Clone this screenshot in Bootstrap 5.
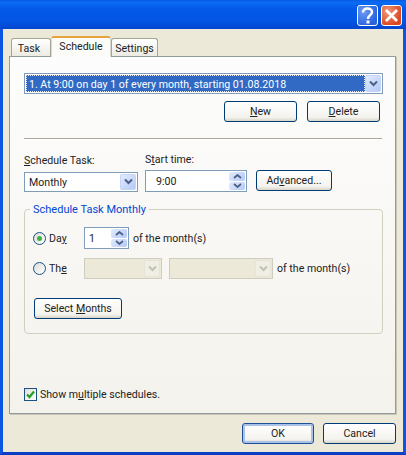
<!DOCTYPE html>
<html lang="en">
<head>
<meta charset="utf-8">
<title>Schedule</title>
<link href="https://cdn.jsdelivr.net/npm/bootstrap@5.3.0/dist/css/bootstrap.min.css" rel="stylesheet">
<style>
html,body{margin:0;padding:0;background:#ece9d8;overflow:hidden}
body{font-family:Roboto,"Liberation Sans",Arial,sans-serif;font-size:10.6px;line-height:14px;color:#222}
.xp-win{width:406px;height:455px;background:#ece9d8;border-left:3px solid #0b55e2;border-right:3px solid #0b55e2;border-bottom:3px solid #0a3fc4;box-sizing:border-box}
.xp-title{height:29px;margin:0 -3px;background:linear-gradient(180deg,#0a5ae0 0,#0a6cf5 8%,#045ae8 30%,#0255e5 70%,#0346cf 100%);padding:5px 4px 0 0;gap:3px;flex:none}
.xp-cap{width:21px;height:21px;border:1px solid #fff;border-radius:3px;padding:0}
.xp-help{background:radial-gradient(circle at 30% 30%,#6d9bf5,#2a62dc 75%)}
.xp-close{background:radial-gradient(circle at 30% 30%,#ef9a7c,#d9461f 75%)}
.xp-tabs{margin:7px 0 -1px 8px;border:0;position:relative;z-index:1;align-items:flex-end;flex:none}
.xp-tab{height:18px;border:1px solid #a5a593;border-bottom:0;border-radius:3px 3px 0 0;background:linear-gradient(180deg,#fff,#ecebe3);padding:3px 0 0;text-align:center;color:#222;margin-bottom:1px}
.xp-tab-first{padding-right:4px}
.xp-tab-on{height:21px;background:#fbfbf8;border-color:#d9d9cc;border-top:2px solid #e8a33d;padding-top:2px;margin:0}
.xp-panel{margin:0 7px 0 6px;border:1px solid #919b9c;background:linear-gradient(180deg,#fdfdfd 0,#f4f2ec 100%);padding:16px 12px 11px 14px;flex:1 1 auto;min-height:0;box-shadow:1px 1px 0 #c9c6b6}
.xp-combo{border:1px solid #7f9db9;background:#fff;padding:1px;align-items:stretch}
.xp-combo-txt{flex:1 1 auto;padding:2px 3px;white-space:nowrap;overflow:hidden}
.xp-sel{background:#316ac5;color:#fff;outline:1px dotted #e8e8e8;outline-offset:-1px;padding-top:3px}
.xp-arrow{width:16px;flex:none;background:linear-gradient(135deg,#e3ebfe,#b3c9f6);border-radius:2px;border:1px solid #c6d4f8}
.xp-main{height:21px}
.xp-btn{height:21px;width:73px;border:1px solid #003c74;border-radius:3px;background:linear-gradient(180deg,#fff 0,#f4f3ee 80%,#d9d5c8 100%);padding:0;font:inherit;color:#222;line-height:18px}
.xp-btn-def{border-color:#1f4f95;box-shadow:inset 0 0 0 2px #a8c2ea}
.xp-rule{margin:16px 1px 0 0;border:0;border-top:1px solid #aca899;opacity:1;box-shadow:0 1px 0 #fff}
.xp-cols{margin-top:14px;align-items:flex-end}
.xp-w1{width:114px}.xp-w2{width:102px;margin-left:7px}.xp-btn-adv{width:76px;margin-left:9px;margin-bottom:1px}
.xp-lab1{margin-bottom:4px}.xp-lab2{margin-bottom:3px}
.xp-spin-wrap{height:22px;border:1px solid #7f9db9;background:#fff;align-items:stretch;padding:1px}
.xp-spin-txt{flex:1 1 auto;padding:3px 3px 0}
.xp-spin-pad{padding-left:9px}
.xp-spin{width:16px;flex:none;gap:1px}
.xp-spin i{flex:1;background:linear-gradient(135deg,#e3ebfe,#b3c9f6);border-radius:2px;display:flex;align-items:center;justify-content:center}
.xp-group{margin:9px 0 0;padding:10px 8px 14px;border:1px solid #d0d0bf;border-radius:4px;min-width:0;width:359px}
.xp-group legend{float:none;width:auto;font-size:11px;line-height:14px;color:#0046d5;margin:0 0 0 -3px;padding:2px 3px 0}
.xp-radio{width:13px;height:13px;border:1px solid #1c5180;border-radius:50%;background:linear-gradient(135deg,#dcdcd5,#fff);flex:none;display:flex;align-items:center;justify-content:center}
.xp-dot{width:5px;height:5px;border-radius:50%;background:#3fb23f;display:block}
.xp-rlabel{width:35px;margin-left:3px;flex:none;padding-top:1px}
.xp-txt{padding-top:1px}
.xp-spinw{width:45px;flex:none;margin-right:4px}
.xp-off{height:21px;background:#ece9d8;border:1px solid #cfcdbd;padding:1px;flex:none}
.xp-off span:first-child{flex:1}
.xp-off .xp-arrow{background:#f0efe6;border-color:#e6e4d8}
.xp-off1{width:78px}.xp-off2{width:104px;margin-left:7px}
.xp-row2{margin-top:9px}
.xp-ml4{margin-left:4px}
.xp-btn-sm{width:88px;margin:19px 0 0 1px;display:block}
.xp-check{width:13px;height:13px;border:1px solid #1c5180;background:linear-gradient(135deg,#e0e0d8,#fff);flex:none;display:flex;align-items:center;justify-content:center}
.xp-chk-txt{margin-left:3px;padding-top:1px}
.xp-actions{gap:10px;margin:7px 3px 0 0}
.xp-foot{flex:none;padding:9px 7px 8px 0;gap:9px}
.xp-ok{width:72px}
.xp-h20{height:20px}
.xp-t1{width:40px}.xp-t2{width:60px}.xp-t3{width:47px}
u{text-underline-offset:1px}
</style>
</head>
<body>
<div class="xp-win d-flex flex-column">
  <div class="xp-title d-flex justify-content-end">
    <button class="xp-cap xp-help d-flex align-items-center justify-content-center" aria-label="Help"><svg width="15" height="17" viewBox="0 0 15 17"><path d="M3 5.500C3 2.500 5 1.500 7.500 1.500S12 3 12 5c0 3-4 3.500-4 7" fill="none" stroke="#fff" stroke-width="2.400"/><rect x="6.500" y="13.500" width="3" height="3" fill="#fff"/></svg></button>
    <button class="xp-cap xp-close d-flex align-items-center justify-content-center" aria-label="Close"><svg width="15" height="15" viewBox="0 0 15 15"><path d="M2 2l11 11M13 2L2 13" stroke="#fff" stroke-width="2.800" fill="none"/></svg></button>
  </div>
  <div class="nav xp-tabs d-flex">
    <div class="xp-tab xp-tab-first xp-t1">Task</div>
    <div class="xp-tab xp-tab-on xp-t2">Schedule</div>
    <div class="xp-tab xp-t3">Settings</div>
  </div>
  <div class="xp-panel d-flex flex-column">
    <div class="xp-combo xp-main d-flex">
      <div class="xp-combo-txt xp-sel">1. At 9:00 on day 1 of every month, starting 01.08.2018</div>
      <div class="xp-arrow d-flex align-items-center justify-content-center"><svg width="9" height="8" viewBox="0 0 9 8"><path d="M1 1.500l3.500 3.500L8 1.500" fill="none" stroke="#4d6185" stroke-width="2"/></svg></div>
    </div>
    <div class="d-flex justify-content-end xp-actions">
      <button class="xp-btn btn"><u>N</u>ew</button>
      <button class="xp-btn btn"><u>D</u>elete</button>
    </div>
    <hr class="xp-rule">
    <div class="xp-cols d-flex">
      <div class="xp-w1">
        <div class="xp-lab1"><u>S</u>chedule Task:</div>
        <div class="xp-combo xp-h20 d-flex">
          <div class="xp-combo-txt">Monthly</div>
          <div class="xp-arrow d-flex align-items-center justify-content-center"><svg width="9" height="8" viewBox="0 0 9 8"><path d="M1 1.500l3.500 3.500L8 1.500" fill="none" stroke="#4d6185" stroke-width="2"/></svg></div>
        </div>
      </div>
      <div class="xp-w2">
        <div class="xp-lab2">S<u>t</u>art time:</div>
        <div class="xp-spin-wrap d-flex">
          <div class="xp-spin-txt xp-spin-pad">9:00</div>
          <div class="xp-spin d-flex flex-column">
            <i><svg width="9" height="5" viewBox="0 0 9 5"><path d="M1 4l3.500-3L8 4" fill="none" stroke="#4d6185" stroke-width="1.800"/></svg></i>
            <i><svg width="9" height="5" viewBox="0 0 9 5"><path d="M1 1l3.500 3L8 1" fill="none" stroke="#4d6185" stroke-width="1.800"/></svg></i>
          </div>
        </div>
      </div>
      <button class="xp-btn btn xp-btn-adv">Ad<u>v</u>anced...</button>
    </div>
    <fieldset class="xp-group">
      <legend>Schedule Task Monthly</legend>
      <div class="d-flex align-items-center">
        <span class="xp-radio"><span class="xp-dot"></span></span>
        <span class="xp-rlabel">Da<u>y</u></span>
        <div class="xp-spin-wrap xp-spinw d-flex">
          <div class="xp-spin-txt">1</div>
          <div class="xp-spin d-flex flex-column">
            <i><svg width="9" height="5" viewBox="0 0 9 5"><path d="M1 4l3.500-3L8 4" fill="none" stroke="#4d6185" stroke-width="1.800"/></svg></i>
            <i><svg width="9" height="5" viewBox="0 0 9 5"><path d="M1 1l3.500 3L8 1" fill="none" stroke="#4d6185" stroke-width="1.800"/></svg></i>
          </div>
        </div>
        <span class="xp-txt">of the month(s)</span>
      </div>
      <div class="d-flex align-items-center xp-row2">
        <span class="xp-radio"></span>
        <span class="xp-rlabel">Th<u>e</u></span>
        <div class="xp-off xp-off1 d-flex"><span></span><span class="xp-arrow d-flex align-items-center justify-content-center"><svg width="9" height="8" viewBox="0 0 9 8"><path d="M1 1.500l3.500 3.500L8 1.500" fill="none" stroke="#c3c1b2" stroke-width="2"/></svg></span></div>
        <div class="xp-off xp-off2 d-flex"><span></span><span class="xp-arrow d-flex align-items-center justify-content-center"><svg width="9" height="8" viewBox="0 0 9 8"><path d="M1 1.500l3.500 3.500L8 1.500" fill="none" stroke="#c3c1b2" stroke-width="2"/></svg></span></div>
        <span class="xp-txt xp-ml4">of the month(s)</span>
      </div>
      <button class="xp-btn btn xp-btn-sm">Select <u>M</u>onths</button>
    </fieldset>
    <div class="d-flex align-items-center mt-auto">
      <span class="xp-check"><svg width="9" height="9" viewBox="0 0 9 9"><path d="M1 4.500l2.500 2.500L8 1.500" fill="none" stroke="#21a121" stroke-width="2.200"/></svg></span>
      <span class="xp-chk-txt">Show m<u>u</u>ltiple schedules.</span>
    </div>
  </div>
  <div class="xp-foot d-flex justify-content-end">
    <button class="xp-btn btn xp-ok xp-btn-def">OK</button>
    <button class="xp-btn btn">Cancel</button>
  </div>
</div>
</body>
</html>
